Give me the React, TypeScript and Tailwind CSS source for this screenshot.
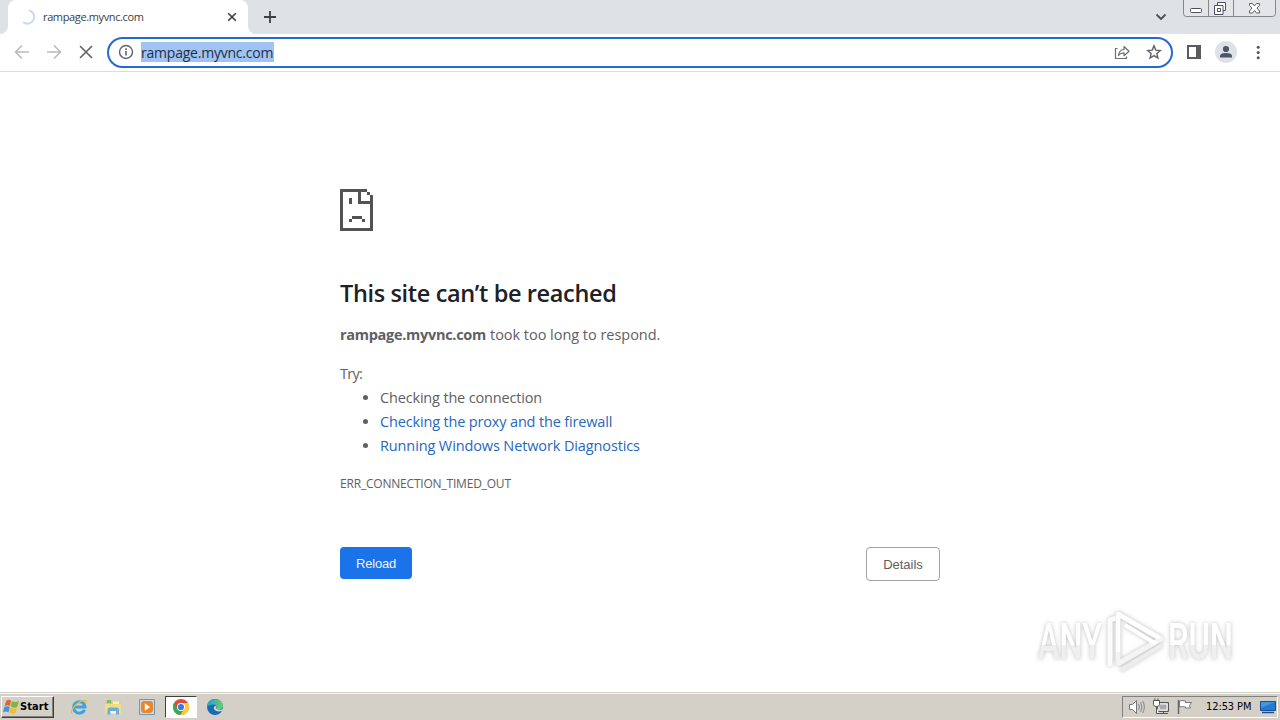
import React from "react";

function TabStrip() {
  return (
    <div className="flex h-[34px] bg-[#dee1e6]">
      <svg className="block shrink-0" width="8" height="34">
        <path d="M0 34a8 8 0 0 0 8-8v8z" fill="#fff" />
      </svg>
      <div className="flex h-[34px] w-60 shrink-0 items-center rounded-t-lg bg-white">
        <svg className="ml-3 block shrink-0" width="16" height="16" viewBox="0 0 16 16" fill="none">
          <path d="M9 1.2A6.8 6.8 0 1 1 3 13" stroke="#cbd8f8" strokeWidth="2" />
        </svg>
        <span className="ml-[7px] w-[175px] whitespace-nowrap font-['Open_Sans',sans-serif] text-[11px] leading-4 tracking-[-0.37px] text-[#3c4043]">
          rampage.myvnc.com
        </span>
        <svg className="ml-[9px] block shrink-0" width="10" height="10" viewBox="0 0 10 10">
          <path d="M1.200 1.200l7.600 7.600M8.800 1.200L1.200 8.800" stroke="#3c4043" strokeWidth="1.600" />
        </svg>
      </div>
      <svg className="block shrink-0" width="8" height="34">
        <path d="M8 34a8 8 0 0 1-8-8v8z" fill="#fff" />
      </svg>
      <svg className="ml-2 mt-[11px] block shrink-0" width="12" height="12" viewBox="0 0 12 12">
        <path d="M6 0v12M0 6h12" stroke="#3c4043" strokeWidth="1.800" />
      </svg>
      <div className="flex-1" />
      <svg className="mt-3 block shrink-0" width="12" height="10" viewBox="0 0 12 10" fill="none">
        <path d="M1.500 2.500L6 7l4.500-4.500" stroke="#4a4d52" strokeWidth="1.800" />
      </svg>
      <svg className="ml-4 mr-1 block shrink-0" width="93" height="18" viewBox="0 0 93 18" fill="none">
        <path d="M.5 0v13.500q0 3 3 3h86q3 0 3-3V0" fill="#e3e5e9" stroke="#84878d" />
        <path d="M25.500 0v16M50.500 0v16" stroke="#84878d" />
        <rect x="7.500" y="8.500" width="11" height="4" rx="1" fill="#fff" stroke="#4c5060" />
        <path d="M34.500 2.500h8v8h-8z" fill="#fff" stroke="#4c5060" />
        <path d="M31.500 5.500h8.500v9h-8.500z" fill="#fff" stroke="#4c5060" />
        <path d="M34.500 8.500h3v3h-3z" stroke="#4c5060" />
        <path d="M66.500 3.500h3l2 2.500 2-2.500h3v2l-2.500 2.500 2.500 3v2h-3l-2-2.500-2 2.500h-3v-2l2.500-3-2.500-2.500z" fill="#fff" stroke="#5c606d" />
      </svg>
    </div>
  );
}

function Toolbar() {
  return (
    <div className="flex h-[38px] items-start border-b border-[#dadce0] bg-white">
      <svg className="ml-[14px] mt-[10px] block shrink-0" width="16" height="16" viewBox="0 0 16 16" fill="none">
        <path d="M15 8H2M8 1.500L1.500 8 8 14.500" stroke="#b8babd" strokeWidth="1.600" />
      </svg>
      <svg className="ml-4 mt-[10px] block shrink-0" width="16" height="16" viewBox="0 0 16 16" fill="none">
        <path d="M1 8h13M8 1.500L14.500 8 8 14.500" stroke="#b8babd" strokeWidth="1.600" />
      </svg>
      <svg className="ml-4 mt-[10px] block shrink-0" width="16" height="16" viewBox="0 0 16 16" fill="none">
        <path d="M2 2l12 12M14 2L2 14" stroke="#5f6368" strokeWidth="1.600" />
      </svg>
      <div className="ml-[13px] mt-[3px] flex h-[31px] w-[1066px] shrink-0 items-center rounded-full border-2 border-[#2469d3] bg-white">
        <svg className="mb-px ml-[9px] block shrink-0" width="16" height="16" viewBox="0 0 16 16" fill="none">
          <circle cx="8" cy="8" r="6.500" stroke="#5f6368" strokeWidth="1.400" />
          <path d="M8 7v4.500M8 4.300v1.700" stroke="#5f6368" strokeWidth="1.600" />
        </svg>
        <span className="mb-px ml-[7px] flex h-5 w-[133px] items-center whitespace-nowrap bg-[#a0c3f3] pt-px font-['Open_Sans',sans-serif] text-[14px] tracking-[-0.22px] text-[#1f2f48]">
          rampage.myvnc.com
        </span>
        <div className="flex-1" />
        <svg className="block shrink-0" width="16" height="16" viewBox="0 0 16 16" fill="none">
          <path d="M3.500 3.500h-2v10h11v-2" stroke="#6b6f74" strokeWidth="1.200" />
          <path d="M4.500 10.500q.5-5.500 5.500-6V1.500l5 4.700-5 4.500V7.800Q6.500 7.600 4.500 10.500z" stroke="#6b6f74" strokeWidth="1.200" strokeLinejoin="round" />
        </svg>
        <svg className="mb-px ml-4 mr-[9px] block shrink-0" width="16" height="16" viewBox="0 0 16 16" fill="none">
          <path d="M8 1.900l1.800 4.200 4.500.4-3.400 3 1 4.500L8 11.600 4.100 14l1-4.500-3.400-3 4.500-.4z" stroke="#5f6368" strokeWidth="1.400" />
        </svg>
      </div>
      <svg className="ml-[14px] mt-[11px] block shrink-0" width="14" height="14" viewBox="0 0 14 14">
        <path d="M0 0h14v14H0zM2 2v10h7V2z" fill="#5a5c60" fillRule="evenodd" />
      </svg>
      <svg className="ml-[14px] mt-[7px] block shrink-0" width="22" height="22" viewBox="0 0 22 22">
        <circle cx="11" cy="11" r="11" fill="#dee1e6" />
        <circle cx="11" cy="8" r="3.100" fill="#505566" />
        <path d="M5 16.500V15q0-3 6-3t6 3v1.500z" fill="#505566" />
      </svg>
      <svg className="ml-[19px] mt-[11px] block shrink-0" width="4" height="15" viewBox="0 0 4 15" fill="#54575c">
        <circle cx="2.200" cy="2.200" r="1.500" />
        <circle cx="2.200" cy="7.500" r="1.500" />
        <circle cx="2.200" cy="12.800" r="1.500" />
      </svg>
    </div>
  );
}

function ErrorPage() {
  return (
    <main className="h-[620px] bg-white pl-[340px] pt-[117px] font-['Open_Sans',sans-serif] text-[#5f6063]">
      <svg className="block" width="33" height="42" viewBox="0 0 33 42" fill="#535353" shapeRendering="crispEdges">
        <path d="M0 0h27v3H3v36h27V15H18V0h3v12h12v30H0z" />
        <path d="M27 3h3v3h-3zM30 6h3v9h-3zM9 9h3v6H9zM12 27h10v3H12zM9 30h3v3H9zM22 30h3v3h-3z" />
      </svg>
      <h1 className="mt-[46px] h-8 whitespace-nowrap text-[23.500px] font-semibold leading-8 tracking-[-0.36px] text-[#202124]">
        This site can’t be reached
      </h1>
      <p className="mt-[14px] flex h-6 whitespace-pre text-[14.500px] leading-6">
        <strong className="w-[146px] font-bold tracking-[-0.29px]">rampage.myvnc.com</strong>
        <span className="ml-1 tracking-[-0.03px]">took too long to respond.</span>
      </p>
      <p className="mt-[15px] h-6 text-[14.500px] leading-6 tracking-[-0.7px]">Try:</p>
      <ul className="list-disc pl-10 text-[14.500px] leading-6">
        <li className="h-6 tracking-[-0.17px]">Checking the connection</li>
        <li className="h-6 tracking-[-0.16px]">
          <a className="text-[#2767bd]">Checking the proxy and the firewall</a>
        </li>
        <li className="h-6 tracking-[-0.12px]">
          <a className="text-[#2767bd]">Running Windows Network Diagnostics</a>
        </li>
      </ul>
      <p className="mt-4 h-5 text-[12px] leading-5 tracking-[-0.2px]">ERR_CONNECTION_TIMED_OUT</p>
      <div className="mt-[53px] flex w-[600px] justify-between font-['Liberation_Sans',sans-serif] text-[13px]">
        <button className="h-8 w-[72px] rounded bg-[#1a73e8] pt-0.5 tracking-[-0.2px] text-[#edf4ff]">Reload</button>
        <button className="h-[34px] w-[74px] rounded border border-[#a0a3a7] bg-white pt-0.5">Details</button>
      </div>
    </main>
  );
}

function Watermark() {
  return (
    <svg className="absolute left-[1030px] top-[602px] overflow-visible drop-shadow-[0_0_2px_rgba(0,0,0,0.25)]" width="210" height="76" viewBox="0 0 210 76">
      <defs>
        <linearGradient id="wm" x1="0" y1="0" x2="0" y2="1">
          <stop offset="0.55" stopColor="#ffffff" />
          <stop offset="0.56" stopColor="#efefef" />
        </linearGradient>
      </defs>
      <g fill="url(#wm)" className="font-['Roboto',sans-serif] text-[50px] font-medium">
        <text x="8" y="57" textLength="64" lengthAdjust="spacingAndGlyphs">ANY</text>
        <text x="138" y="57" textLength="65" lengthAdjust="spacingAndGlyphs">RUN</text>
      </g>
      <g fill="none" strokeWidth="5" strokeLinejoin="round">
        <path d="M80 64V18l6-2" stroke="#fbfbfb" />
        <path d="M88 60V12l43 25-42 24z" stroke="#f4f4f4" />
        <path d="M88 50V12l42 24M95 23l31 19" stroke="#fff" strokeWidth="4" />
        <path d="M91 68l41-25" stroke="#ededed" strokeWidth="4" />
      </g>
    </svg>
  );
}

function StartButton() {
  return (
    <div className="flex h-[22px] w-[53px] shrink-0 items-center border border-b-[#404040] border-l-white border-r-[#404040] border-t-white bg-[#d4d0c8] shadow-[inset_-1px_-1px_0_#808080]">
      <svg className="ml-px block shrink-0" width="17" height="16" viewBox="0 0 17 16">
        <path d="M3.500 1.500q2.500-1.500 4.500 0L6.900 7q-2.700-1.500-5.400 0z" fill="#e2632c" />
        <path d="M8.800 2q3.200 2 7.200-.3L14.300 8q-3.800 1.500-6.600-.5z" fill="#80b541" />
        <path d="M1.300 8q2.700-1.500 5.400 0L5.500 13.500q-2.700-1.800-5.500 0z" fill="#4593d2" />
        <path d="M7.500 8.500q3 1.800 6.500.4L12.500 14q-3.200 1.500-6.400-.4z" fill="#f2bd32" />
      </svg>
      <span className="pt-px font-['DejaVu_Sans_Condensed','DejaVu_Sans',sans-serif] text-[11px] font-bold tracking-[0.1px] text-black">Start</span>
    </div>
  );
}

function QuickLaunch() {
  return (
    <>
      <svg className="ml-4 block shrink-0" width="18" height="18" viewBox="0 0 18 18" fill="none">
        <path d="M14.500 11.800A5.700 5.700 0 1 1 15 9H5" stroke="#3ba4e0" strokeWidth="3" />
        <path d="M2 15.500C-1 13 8 2.500 14.500 2.300q2.800 0 1.300 3.200" stroke="#e6bd45" strokeWidth="1.300" />
      </svg>
      <svg className="ml-4 block shrink-0" width="18" height="18" viewBox="0 0 18 18">
        <path d="M1.500 3H7l1 1.500h8.500V15h-15z" fill="#e3c75c" />
        <path d="M3 2h4v3H3z" fill="#77be69" />
        <path d="M9 3.500h6V7H9z" fill="#f8efbd" />
        <path d="M1 6h16v9.500H1z" fill="#f3dc88" />
        <path d="M3.500 16.500V12q0-2.500 2.500-2.500h6.500q2.500 0 2.500 2.500v4.500h-3V13H6.500v3.500z" fill="#64b1df" />
        <path d="M6.500 13H12v2.500H6.500z" fill="#fff4c9" />
      </svg>
      <svg className="ml-4 block shrink-0" width="18" height="18" viewBox="0 0 18 18">
        <path d="M1.500 1.500h15v15h-15z" fill="#c9dced" stroke="#669ac5" />
        <path d="M6 3h6q3 0 3 3v6q0 3-3 3H6q-3 0-3-3V6q0-3 3-3z" fill="#f08521" />
        <path d="M6.800 5.300l5.300 3.700-5.300 3.700z" fill="#fff" />
      </svg>
      <div className="ml-[9px] flex h-[22px] w-[32px] shrink-0 items-center justify-center border border-b-white border-l-[#404040] border-r-white border-t-[#404040] bg-white">
        <svg className="block" width="16" height="16" viewBox="0 0 16 16">
          <circle cx="8" cy="8" r="8" fill="#e34a3a" />
          <path d="M1.070 4A8 8 0 0 0 7.200 15.960L11.460 10 8 8 4.540 10z" fill="#35a853" />
          <path d="M15 4.100A8 8 0 0 1 7.200 15.960L11.460 10 8 4.100z" fill="#f7cd38" />
          <circle cx="8" cy="8" r="4" fill="#fff" />
          <circle cx="8" cy="8" r="3.100" fill="#3e78dc" />
        </svg>
      </div>
      <svg className="ml-[9px] block shrink-0" width="18" height="18" viewBox="0 0 18 18">
        <defs>
          <linearGradient id="edge" x1="0" y1="0" x2="1" y2="0.3">
            <stop offset="0" stopColor="#229bdc" />
            <stop offset="1" stopColor="#60cf70" />
          </linearGradient>
        </defs>
        <circle cx="9" cy="9" r="8" fill="#176cb8" />
        <path d="M1 9C1.500 3.800 5 1 9 1c4.500 0 8 3.200 8 6.800 0 3.400-4.700 5.100-6.800 3.300 1.500-1.700.9-4.500-2.600-4.600C4.500 6.400 2 7.500 1 9z" fill="url(#edge)" />
        <path d="M8 8.800c-.9 3.200 2.500 6 8.500 4l1-2.200c-2.300 2-7.300 1.400-7.300-.5q.5-1 0-2.500z" fill="#d4d0c8" />
      </svg>
    </>
  );
}

function SystemTray() {
  return (
    <div className="mr-[2px] flex h-[22px] w-[156px] shrink-0 items-center border border-b-white border-l-[#808080] border-r-white border-t-[#808080]">
      <svg className="ml-[5px] block shrink-0" width="18" height="18" viewBox="0 0 18 18" fill="none">
        <path d="M1.500 6.500h3l4-4v13l-4-4h-3z" fill="#fff" stroke="#77777a" />
        <path d="M10.500 6q2 3 0 6M12.500 4q3 5 0 10M14.700 3q3.300 6 0 12" stroke="#88888a" />
      </svg>
      <svg className="ml-[6px] block shrink-0" width="18" height="18" viewBox="0 0 18 18" fill="none">
        <path d="M5.500 4.500h11v9h-11z" fill="#c5c5c1" stroke="#555" />
        <path d="M7 6h8v6H7z" fill="#aaa" stroke="#f7f7f7" />
        <path d="M7 15.500h9M11.500 13.500v2" stroke="#555" />
        <path d="M1.500 2.500h6v4q0 2-3 2t-3-2zM3 .5v2M6 .5v2M4.500 8.500v7H7" fill="#fff" stroke="#555" />
      </svg>
      <svg className="ml-[6px] block shrink-0" width="18" height="18" viewBox="0 0 18 18" fill="none">
        <path d="M2.500 2v14" stroke="#666" strokeWidth="1.500" />
        <path d="M3.500 3q3-1 6 0v1.500h6l-2 3 1 2.500H9.500V9q-3-1-6 0z" fill="#fff" stroke="#777" />
      </svg>
      <span className="ml-[12px] w-[47px] whitespace-nowrap pt-px font-['DejaVu_Sans_Condensed','DejaVu_Sans',sans-serif] text-[11px] tracking-[-0.1px] text-black">12:53 PM</span>
      <svg className="ml-[7px] block shrink-0" width="16" height="16" viewBox="0 0 16 16">
        <path d="M.5 2.500h15v9H.5z" fill="#2478cf" stroke="#174e9b" />
        <path d="M1 3h14L1 9z" fill="#4296df" />
        <path d="M2 13.500h12" stroke="#1c4d91" strokeWidth="1.500" />
      </svg>
    </div>
  );
}

export default function App() {
  return (
    <div className="relative flex h-[720px] w-[1280px] flex-col overflow-hidden bg-white">
      <TabStrip />
      <Toolbar />
      <ErrorPage />
      <footer className="flex h-7 items-center border-t border-[#d4d0c8] bg-[#d4d0c8] pl-px pt-px shadow-[inset_0_1px_0_#f7f6f4]">
        <StartButton />
        <QuickLaunch />
        <div className="flex-1" />
        <SystemTray />
      </footer>
      <Watermark />
    </div>
  );
}
